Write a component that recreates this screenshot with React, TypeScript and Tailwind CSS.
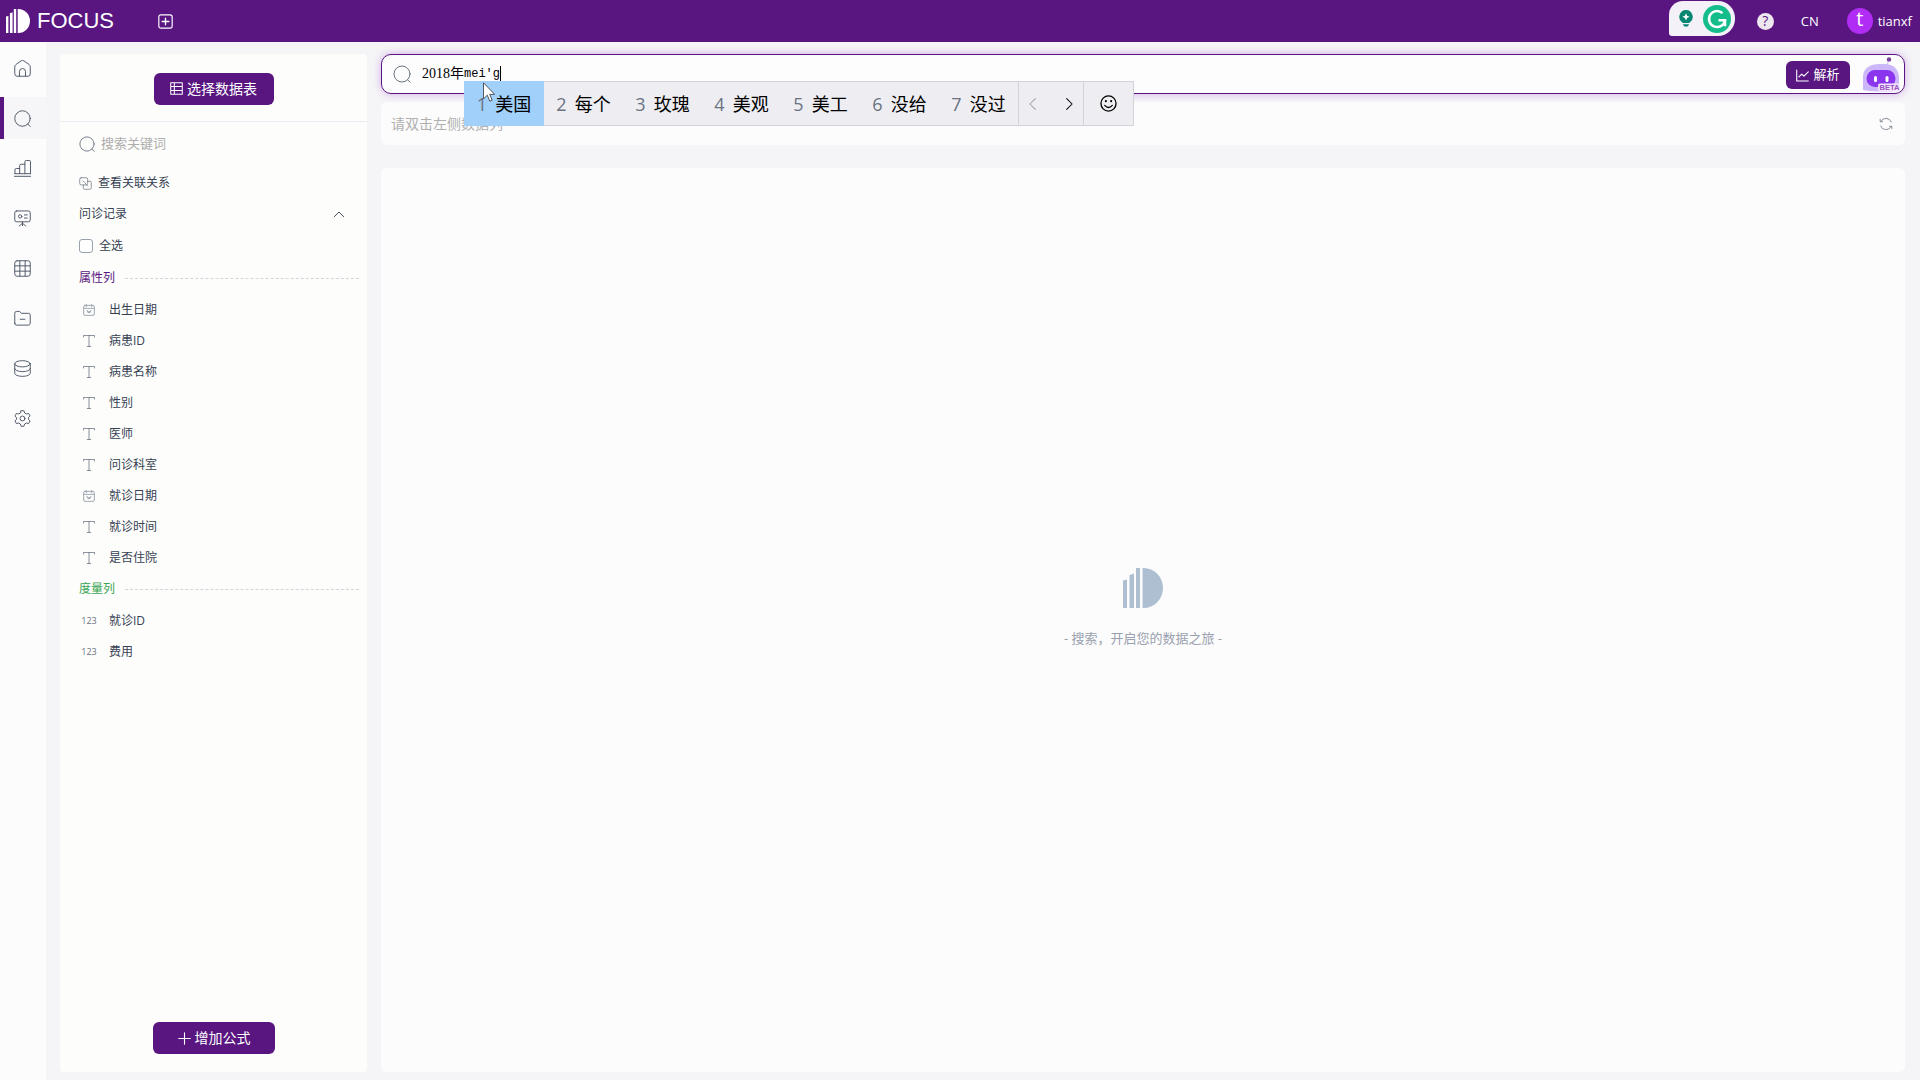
import type { ReactNode } from 'react';

const columns = [
  { name: '出生日期', type: 'date' },
  { name: '病患ID', type: 'text' },
  { name: '病患名称', type: 'text' },
  { name: '性别', type: 'text' },
  { name: '医师', type: 'text' },
  { name: '问诊科室', type: 'text' },
  { name: '就诊日期', type: 'date' },
  { name: '就诊时间', type: 'text' },
  { name: '是否住院', type: 'text' },
];

const measures = [
  { name: '就诊ID', type: 'number' },
  { name: '费用', type: 'number' },
];

const candidates = ['美国', '每个', '玫瑰', '美观', '美工', '没给', '没过'];

function Icon({ className, children }: { className: string; children: ReactNode }) {
  return (
    <svg
      className={className}
      viewBox="0 0 18 18"
      fill="none"
      stroke="currentColor"
      strokeLinecap="round"
      strokeLinejoin="round"
      aria-hidden="true"
    >
      {children}
    </svg>
  );
}

function SearchIcon({ className }: { className: string }) {
  return (
    <Icon className={className}>
      <circle cx="9" cy="9" r="8" />
      <path d="M14.5 14.8l2.7 2.4" />
    </Icon>
  );
}

function Logo({ className }: { className: string }) {
  return (
    <svg className={className} viewBox="0 0 40 40" fill="currentColor" aria-hidden="true">
      <path d="M0 12.5l4-1V40H0zM6.500 7l4.500-1.500V40H6.500zM13 0h4v40h-4zM19.500 0h1a19.500 20 0 0 1 0 40h-1z" />
    </svg>
  );
}

const navItems = [
  {
    label: '首页',
    icon: (
      <path d="M.8 7.200Q.8 5.800 2 4.800L7.500.9Q9 0 10.500.9L16 4.800Q17.200 5.800 17.200 7.200V14.800Q17.200 17.200 14.800 17.200H3.200Q.8 17.200.8 14.800zM5.800 17V12.200Q5.800 9 9 9T12.200 12.200V17" />
    ),
  },
  {
    label: '搜索',
    icon: (
      <>
        <circle cx="9" cy="9" r="8.200" />
        <path d="M14.5 14.800l2.700 2.700" />
      </>
    ),
  },
  {
    label: '图表',
    icon: (
      <path d="M.5 17.300h17M1 14.500v-4q0-1.500 1.500-1.500H6M1 14.500h16.500M6 14.500V6q0-1.500 1.500-1.500h4M11.500 14.500V2q0-1.500 1.500-1.500h3q1.500 0 1.500 1.500v12.500" />
    ),
  },
  {
    label: '看板',
    icon: (
      <>
        <rect x=".8" y="1" width="16.400" height="11.500" rx="2" />
        <path d="M11 5.200h3M11 8.500h3M9 12.500v4M9 14l-3.500 3M9 14l3.500 3" />
        <circle cx="6.500" cy="6.800" r="1.800" />
      </>
    ),
  },
  {
    label: '数据表',
    icon: (
      <>
        <rect x=".8" y=".8" width="16.400" height="16.400" rx="2.500" />
        <path d="M1 6.200h16M1 11.800h16M6.200 1v16M11.800 1v16" />
      </>
    ),
  },
  {
    label: '文件夹',
    icon: (
      <path d="M.8 14V3.500Q.8 1.500 2.800 1.500H6l1.800 2h7.400q2 0 2 2V14q0 2-2 2H2.800q-2 0-2-2zM6.500 9.800h5" />
    ),
  },
  {
    label: '数据源',
    icon: (
      <>
        <ellipse cx="9" cy="4" rx="8.200" ry="3.300" />
        <path d="M.8 4v10c0 1.800 3.700 3.300 8.200 3.300s8.200-1.500 8.200-3.300V4M.8 9c0 1.800 3.700 3.300 8.200 3.300S17.200 10.800 17.200 9" />
      </>
    ),
  },
  {
    label: '设置',
    icon: (
      <>
        <path d="M7.500.8h3l.8 2.400 1.700 1 2.500-.5 1.500 2.600-1.700 1.900v1.600l1.700 1.900-1.500 2.600-2.500-.5-1.700 1-.8 2.400h-3l-.8-2.400-1.700-1-2.500.5L1 11.700l1.700-1.900V8.200L1 6.300l1.500-2.600 2.500.5 1.700-1z" />
        <circle cx="9" cy="9" r="2.600" />
      </>
    ),
  },
];

function TypeIcon({ type }: { type: string }) {
  if (type === 'number') {
    return <span className="w-5 text-center text-[9px] text-gray-500">123</span>;
  }
  if (type === 'date') {
    return (
      <span className="flex w-5 justify-center">
        <Icon className="size-3 text-gray-400">
          <rect x="1" y="2" width="16" height="15" rx="2" strokeWidth="1.400" />
          <path d="M1 6.500h16M5 1v3M13 1v3M6 9.500l2 4 1-3 1 3 2-4" strokeWidth="1.400" />
        </Icon>
      </span>
    );
  }
  return (
    <span className="flex w-5 justify-center">
      <Icon className="size-3 text-gray-500">
        <path d="M.7 3V.7h16.600V3M9 .7v16.600M6.500 17.300h5" strokeWidth="1.200" />
      </Icon>
    </span>
  );
}

function ColumnList({ items }: { items: { name: string; type: string }[] }) {
  return (
    <ul>
      {items.map((item) => (
        <li key={item.name} className="flex h-[31px] items-center gap-2.5">
          <TypeIcon type={item.type} />
          {item.name}
        </li>
      ))}
    </ul>
  );
}

function GroupTitle({ title, className }: { title: string; className: string }) {
  return (
    <div className="flex h-8 items-center gap-2.5">
      <h3 className={className}>{title}</h3>
      <div className="flex-1 border-t border-dashed border-gray-300" />
    </div>
  );
}

function Header() {
  return (
    <header className="flex h-[42px] items-center bg-[#591681] pr-2 pl-1.5 text-white">
      <Logo className="size-6" />
      <span className="ml-[7px] font-['Liberation_Sans',sans-serif] text-[22px] leading-6">FOCUS</span>
      <button aria-label="新建" className="ml-11">
        <Icon className="size-[15px]">
          <rect x="1" y="1" width="16" height="16" rx="2.500" strokeWidth="1.400" />
          <path d="M9 5v8M5 9h8" strokeWidth="1.600" />
        </Icon>
      </button>

      {/* 写作助手 */}
      <div className="mt-px ml-auto flex h-[35px] w-[66px] items-center justify-between self-start rounded-tl-[14px] rounded-r-[17px] rounded-bl-[3px] bg-[#f4f1f9] pr-1 pl-2.5">
        <svg className="h-[17px] w-3.5" viewBox="0 0 14 17" aria-hidden="true">
          <path d="M7 0a6.800 6.800 0 0 1 4 12.200L10 13H4l-1-.8A6.800 6.800 0 0 1 7 0z" fill="#078573" />
          <path d="M7 3.200l1.100 2.500 2.500 1.100-2.500 1.100L7 10.400 5.900 7.900 3.400 6.800l2.500-1.100z" fill="#fff" />
          <path d="M3.800 14.300h6.400l-1.500 2.200H5.300z" fill="#078573" />
        </svg>
        <svg className="size-7" viewBox="0 0 28 28" fill="none" aria-hidden="true">
          <circle cx="14" cy="14" r="14" fill="#15bd8c" />
          <path d="M19.500 8.200A8 8 0 1 0 22 14.800" stroke="#fff" strokeWidth="2.500" />
          <path d="M15.500 15.300H22v6" stroke="#fff" strokeWidth="2.500" />
        </svg>
      </div>

      <button
        aria-label="帮助"
        className="ml-[22px] flex size-[17px] items-center justify-center rounded-full bg-[#eee7f0] text-[14px] leading-4 text-[#591681]"
      >
        ?
      </button>
      <button className="ml-[27px] text-[13px] leading-5">CN</button>
      <button className="ml-7 flex items-center gap-[5px] text-[13px] leading-5">
        <span className="flex size-[26px] items-center justify-center rounded-full bg-[#b12cf5] pb-1 text-[20px] leading-5">
          t
        </span>
        tianxf
      </button>
    </header>
  );
}

function NavRail() {
  return (
    <nav className="flex w-[46px] shrink-0 flex-col gap-2 bg-[#fcfcfd] pt-[5px]">
      {navItems.map((item) => (
        <a
          key={item.label}
          href="#"
          aria-label={item.label}
          className={
            item.label === '搜索'
              ? 'flex h-[42px] items-center border-l-4 border-[#591681] bg-[#f6f6f8] pl-2.5 text-gray-600'
              : 'flex h-[42px] items-center pl-3.5 text-gray-600'
          }
        >
          <Icon className="size-[17px]">{item.icon}</Icon>
        </a>
      ))}
    </nav>
  );
}

function DataPanel() {
  return (
    <aside className="mt-3 mb-2 flex w-[307px] shrink-0 flex-col rounded bg-[#fdfdfb] text-xs text-gray-700">
      <div className="flex h-[68px] items-center justify-center border-b border-[#ececf2] pt-1.5 pb-1">
        <button className="flex h-8 w-[120px] items-center justify-center gap-1 rounded-md bg-[#591681] text-sm text-white">
          <Icon className="size-[13px]">
            <path d="M1 1h16v16H1zM1 6.300h16M1 11.700h16M6 1v16" strokeWidth="1.400" />
          </Icon>
          选择数据表
        </button>
      </div>

      <div className="flex flex-1 flex-col pt-1 pr-2 pl-[19px]">
        <label className="flex h-9 items-center gap-1.5">
          <SearchIcon className="size-4 text-gray-500" />
          <input
            aria-label="搜索关键词"
            placeholder="搜索关键词"
            className="min-w-0 flex-1 bg-transparent text-[13px] outline-none placeholder:text-[#adadad]"
          />
        </label>
        <button className="mt-1 flex h-[34px] items-center gap-1.5">
          <Icon className="size-[13px] text-gray-500">
            <rect x="1" y="1" width="11" height="10" rx="2" />
            <path d="M12 6h3.500Q17 6 17 7.500V15q0 2-2 2H8q-2 0-2-2v-4M6 5.500l6 7" />
          </Icon>
          查看关联关系
        </button>
        <button className="flex h-7 items-center justify-between pr-3.5">
          问诊记录
          <Icon className="h-3 w-3">
            <path d="M2 13l7-7 7 7" strokeWidth="1.400" />
          </Icon>
        </button>
        <label className="mt-0.5 flex h-8 items-center gap-1.5">
          <input type="checkbox" className="size-3.5 appearance-none rounded-[3px] border border-gray-400 bg-white" />
          全选
        </label>
        <GroupTitle title="属性列" className="text-[#591681]" />
        <ColumnList items={columns} />
        <GroupTitle title="度量列" className="text-[#3aa655]" />
        <ColumnList items={measures} />

        <button className="mt-auto mr-2.5 mb-[18px] flex h-8 w-[122px] items-center justify-center gap-1 self-center rounded-md bg-[#591681] text-sm text-white">
          <Icon className="size-[13px]">
            <path d="M9 1v16M1 9h16" strokeWidth="1.500" />
          </Icon>
          增加公式
        </button>
      </div>
    </aside>
  );
}

function ImePopup() {
  return (
    <div className="absolute top-[26px] left-[82px] z-10 flex h-[45px] w-[670px] border border-[#d3d3dc] bg-[#eeeef2] text-lg text-black">
      {candidates.map((word, i) => (
        <button
          key={word}
          className={
            i === 0
              ? '-my-px -ml-px flex w-20 shrink-0 items-center justify-center gap-2 bg-[#a1d0fb]'
              : 'flex w-[79px] shrink-0 items-center justify-center gap-2'
          }
        >
          <span className="text-gray-500">{i + 1}</span>
          {word}
        </button>
      ))}
      <div className="flex flex-1 items-center justify-between border-l border-[#d3d3dc] px-[7px]">
        <button aria-label="上一页" className="text-gray-400">
          <Icon className="size-3.5">
            <path d="M12 2L5 9l7 7" strokeWidth="1.300" />
          </Icon>
        </button>
        <button aria-label="下一页">
          <Icon className="size-3.5">
            <path d="M6 2l7 7-7 7" strokeWidth="1.300" />
          </Icon>
        </button>
      </div>
      <button aria-label="表情" className="flex w-[50px] items-center justify-center border-l border-[#d3d3dc]">
        <Icon className="size-[17px]">
          <circle cx="9" cy="9" r="8" strokeWidth="1.400" />
          <path d="M5 11q4 4.500 8 0" strokeWidth="1.400" />
          <path d="M6.200 6.500v.2M11.800 6.500v.2" strokeWidth="2.200" />
        </Icon>
      </button>
      {/* 鼠标指针 */}
      <svg className="absolute top-0 left-[18px] h-5 w-3" viewBox="0 0 12 20" aria-hidden="true">
        <path d="M.5.8v16l3.800-3.600 2.500 6 2.400-1-2.500-5.800h5z" fill="#fff" stroke="#333" strokeWidth=".8" />
      </svg>
    </div>
  );
}

function Robot() {
  return (
    <svg className="h-9 w-[38px]" viewBox="0 0 38 36" aria-hidden="true">
      <path d="M1 34V21C1 12 8 8 18 8h4c10 0 15 6 15 14v12q-5 2-18 1.500T1 34z" fill="#cbb7fa" />
      <circle cx="27" cy="3.500" r="2.200" fill="#79429f" />
      <path d="M26.500 5.500L25 9" stroke="#cbb7fa" />
      <rect x="4.500" y="14" width="29" height="17" rx="8.500" fill="#8c35ef" />
      <rect x="12" y="20" width="3" height="6" rx="1.500" fill="#fff" />
      <rect x="23.500" y="20" width="3" height="6" rx="1.500" fill="#fff" />
      <rect x="16" y="27.500" width="22" height="8" rx="2" fill="#f1e6fd" />
      <text x="17.500" y="34.300" fontSize="7.500" fontWeight="bold" fill="#9a4fc4" fontFamily="Liberation Sans">
        BETA
      </text>
    </svg>
  );
}

function SearchBar() {
  return (
    <div className="relative flex h-10 items-center rounded-[10px] border border-[#591681] bg-[#fdfdfd] pr-1 pl-[11px] shadow-[0_0_8px_rgba(160,70,210,0.4)]">
      <SearchIcon className="size-[18px] text-gray-500" />
      <div className="ml-[11px] flex flex-1 items-center">
        <input
          aria-label="搜索"
          defaultValue="2018年"
          className="w-[42px] bg-transparent font-['Liberation_Serif','Noto_Sans_CJK_SC',serif] text-sm text-black outline-none"
        />
        <span className="border-b border-dotted border-black font-['Liberation_Mono',monospace] text-xs leading-4 text-black">
          mei'g
        </span>
        <span className="h-4 w-px bg-black" />
      </div>
      <button className="mt-0.5 flex h-7 w-16 items-center justify-center gap-1 rounded-md bg-[#591681] text-[13px] text-white">
        <Icon className="size-[13px]">
          <path d="M1 1.500v15h16M4 11l4-4 3 3 6-6" strokeWidth="1.500" />
        </Icon>
        解析
      </button>
      <button aria-label="智能助手" className="ml-3">
        <Robot />
      </button>
      <ImePopup />
    </div>
  );
}

export default function App() {
  return (
    <div className="flex min-h-screen flex-col bg-[#f5f5f7] font-['Open_Sans','Noto_Sans_CJK_SC',sans-serif]">
      <Header />
      <div className="flex flex-1">
        <NavRail />
        <div className="flex flex-1 gap-3.5 pr-[15px] pl-3.5">
          <DataPanel />
          <main className="flex min-w-0 flex-1 flex-col pt-3 pb-2">
            <SearchBar />
            <div className="mt-2 flex h-[43px] items-center justify-between rounded-md bg-[#fcfcfc] pr-3 pl-2.5 text-sm text-[#b0b0b0]">
              请双击左侧数据列
              <button aria-label="刷新" className="text-gray-500">
                <Icon className="size-3.5">
                  <path d="M2.500 5.500A7.500 7.500 0 0 1 16 6.500M15.500 12.500A7.500 7.500 0 0 1 2 11.500M1.500 3v3h3M16.500 15v-3h-3" />
                </Icon>
              </button>
            </div>
            <section className="mt-[23px] flex flex-1 flex-col items-center justify-center rounded-md bg-[#fcfcfc] pb-6">
              <Logo className="size-10 text-[#adbfd0]" />
              <p className="mt-5 text-[13px] leading-5 text-gray-400">- 搜索，开启您的数据之旅 -</p>
            </section>
          </main>
        </div>
      </div>
    </div>
  );
}
